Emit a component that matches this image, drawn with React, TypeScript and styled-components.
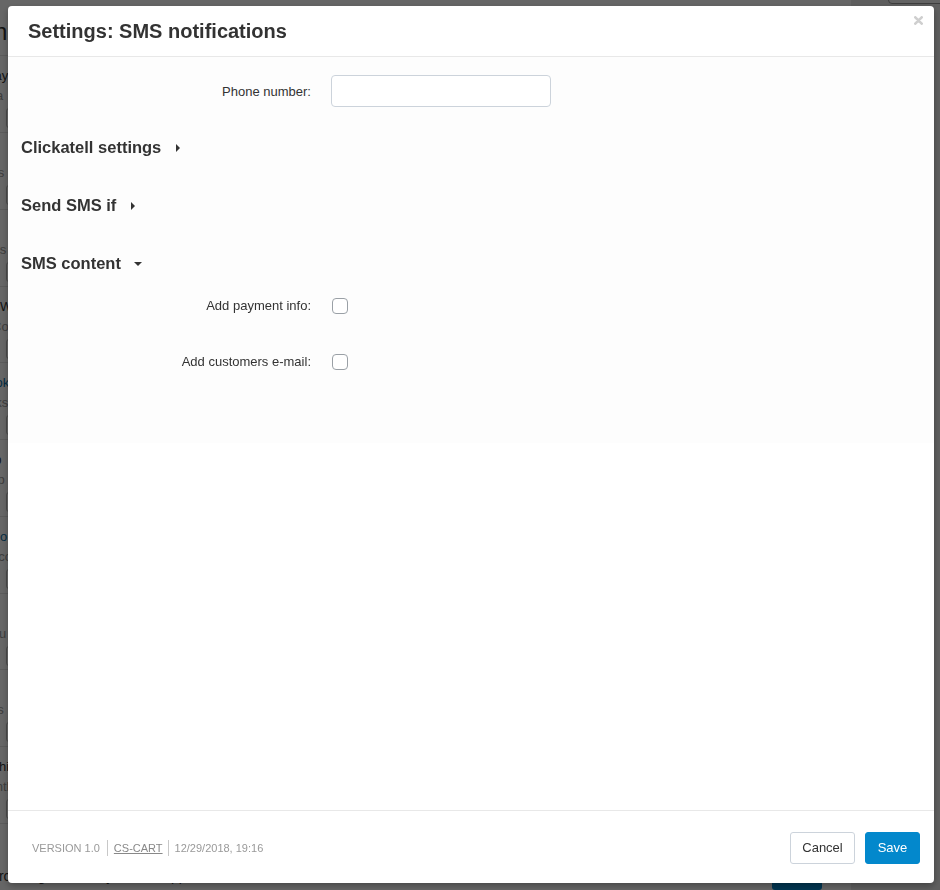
import React from "react";
import styled, { createGlobalStyle } from "styled-components";

const GlobalStyle = createGlobalStyle`
  html, body { margin: 0; padding: 0; }
  body {
    font-family: "Liberation Sans", Arial, sans-serif;
    background: #ffffff;
    overflow: hidden;
  }
  * { box-sizing: border-box; }
`;

/* ---------- background page (under the overlay) ---------- */

const Page = styled.div`
  position: relative;
  width: 940px;
  height: 890px;
  overflow: hidden;
  display: flex;
  background: #ffffff;
`;

const PageMain = styled.div`
  flex: 1;
  display: flex;
  flex-direction: column;
`;

const PageTop = styled.div`
  height: 57px;
  border-bottom: 1px solid #e4e4e4;
  display: flex;
  align-items: center;
  padding-top: 8px;
`;

const PageHeading = styled.div`
  font-size: 24px;
  color: #333;
  margin-left: -62px;
  white-space: nowrap;
`;

const BgRow = styled.div`
  height: 78px;
  border-bottom: 1px solid #e4e4e4;
  padding-top: 12px;
  display: flex;
  flex-direction: column;
  gap: 4px;
  white-space: nowrap;
`;

const BgTitle = styled.div<{ $link?: boolean; $shift: number }>`
  font-size: 13px;
  height: 16px;
  color: ${(p) => (p.$link ? "#0b71a8" : "#333")};
  margin-left: ${(p) => -p.$shift}px;
`;

const BgDesc = styled.div<{ $shift: number }>`
  font-size: 13px;
  height: 16px;
  color: #999;
  margin-left: ${(p) => -p.$shift}px;
`;

const BgInput = styled.div`
  margin-left: 6px;
  width: 300px;
  height: 20px;
  border: 1px solid #bbb;
  border-radius: 3px;
`;

const BgLast = styled.div`
  padding-top: 44px;
  display: flex;
  align-items: flex-start;
  font-size: 14px;
  color: #333;
  white-space: nowrap;
`;

const BgLastText = styled.span`
  margin-left: -26px;
`;

const BgButton = styled.div`
  margin-left: auto;
  margin-right: 29px;
  margin-top: -2px;
  width: 50px;
  height: 24px;
  border-radius: 3px;
  background: #0388cc;
`;

const PageSide = styled.div`
  width: 89px;
  background: #ececec;
  display: flex;
  flex-direction: column;
  padding: 0 0 0 37px;
`;

const SideTab = styled.div`
  width: 60px;
  height: 10px;
  margin-top: -6px;
  border: 1px solid #999;
  border-radius: 4px;
  background: #f8f8f8;
`;

const Overlay = styled.div`
  position: fixed;
  inset: 0;
  background: rgba(0, 0, 0, 0.6);
`;

/* ---------- modal ---------- */

const Modal = styled.div`
  position: fixed;
  top: 6px;
  left: 8px;
  width: 926px;
  height: 877px;
  background: #ffffff;
  border-radius: 4px;
  box-shadow: 0 3px 7px rgba(0, 0, 0, 0.3);
  display: flex;
  flex-direction: column;
  overflow: hidden;
`;

const Header = styled.div`
  position: relative;
  height: 51px;
  flex: none;
  border-bottom: 1px solid #e8e8e8;
  display: flex;
  align-items: center;
  padding: 0 20px 1px;
`;

const Title = styled.h3`
  margin: 0;
  font-size: 20px;
  font-weight: bold;
  color: #333;
  line-height: 24px;
`;

const Close = styled.button`
  position: absolute;
  top: 10px;
  right: 11px;
  border: 0;
  background: transparent;
  padding: 0;
  width: 9px;
  height: 9px;
  display: flex;
  cursor: pointer;
`;

const Body = styled.div`
  flex: 1;
  background: #ffffff;
`;

const Content = styled.div`
  background: #fdfdfd;
  padding: 18px 0 72px 13px;
  display: flex;
  flex-direction: column;
`;

const FormRow = styled.div<{ $mt?: number; $h: number }>`
  display: grid;
  grid-template-columns: 290px 1fr;
  column-gap: 20px;
  align-items: center;
  height: ${(p) => p.$h}px;
  margin-top: ${(p) => p.$mt ?? 0}px;
`;

const Label = styled.label<{ $down?: number }>`
  text-align: right;
  font-size: 13px;
  color: #333;
  padding-top: ${(p) => p.$down ?? 0}px;
`;

const TextInput = styled.input`
  width: 220px;
  height: 32px;
  border: 1px solid #ccd3db;
  border-radius: 4px;
  background: #fff;
  padding: 4px 8px;
  font-size: 13px;
  font-family: inherit;
  outline: none;
`;

const CheckBox = styled.input.attrs({ type: "checkbox" })`
  appearance: none;
  -webkit-appearance: none;
  display: block;
  margin: 1px 0 0 1px;
  width: 16px;
  height: 16px;
  border: 1px solid #9aa0a6;
  border-radius: 4px;
  background: #fff;
`;

const Section = styled.div<{ $mt: number }>`
  display: flex;
  align-items: center;
  height: 24px;
  margin-top: ${(p) => p.$mt}px;
  font-size: 16.5px;
  font-weight: bold;
  color: #333;
  cursor: pointer;
`;

const Caret = styled.span<{ $open?: boolean }>`
  display: inline-block;
  width: 0;
  height: 0;
  margin-left: ${(p) => (p.$open ? 13 : 15)}px;
  margin-top: 1px;
  ${(p) =>
    p.$open
      ? `border-left: 4px solid transparent;
         border-right: 4px solid transparent;
         border-top: 4px solid #333;`
      : `border-top: 4px solid transparent;
         border-bottom: 4px solid transparent;
         border-left: 4px solid #333;`}
`;

const Footer = styled.div`
  flex: none;
  height: 73px;
  border-top: 1px solid #e8e8e8;
  display: flex;
  align-items: center;
  justify-content: space-between;
  padding: 0 14px 0 24px;
`;

const Info = styled.div`
  display: flex;
  align-items: center;
  font-size: 11px;
  color: #999;
  margin-top: 1px;
`;

const Sep = styled.span<{ $l: number; $r: number }>`
  display: inline-block;
  width: 1px;
  height: 16px;
  background: #c8c8c8;
  margin: 0 ${(p) => p.$r}px 0 ${(p) => p.$l}px;
`;

const InfoLink = styled.a`
  color: #888;
  text-decoration: underline;
`;

const Actions = styled.div`
  display: flex;
  gap: 10px;
  margin-top: 1px;
`;

const Button = styled.button<{ $primary?: boolean }>`
  height: 32px;
  width: ${(p) => (p.$primary ? 55 : 65)}px;
  padding: 0;
  border-radius: 3px;
  font-family: inherit;
  font-size: 13px;
  cursor: pointer;
  border: 1px solid ${(p) => (p.$primary ? "#0388cc" : "#ccd3db")};
  background: ${(p) => (p.$primary ? "#0388cc" : "#ffffff")};
  color: ${(p) => (p.$primary ? "#ffffff" : "#333")};
`;

const bgRows: { title?: string; link?: boolean; ts?: number; desc: string; ds: number }[] = [
  { title: "Gateway", ts: 43, desc: "Cleara", ds: 35 },
  { desc: "Purpos", ds: 37 },
  { desc: "Sells", ds: 22 },
  { title: "Wa", ts: 0, desc: "Cof", ds: 8 },
  { title: "Hook", link: true, ts: 21, desc: "Links", ds: 22 },
  { title: "Gap", ts: 23, desc: "Grp", ds: 17 },
  { title: "Boo", link: true, ts: 16, desc: "Acco", ds: 17 },
  { desc: "Statu", ds: 24 },
  { desc: "Tess", ds: 23 },
  { title: "This", ts: 9, desc: "Withth", ds: 23 },
];

export default function App() {
  return (
    <>
      <GlobalStyle />
      <Page>
        <PageMain>
          <PageTop>
            <PageHeading>Addon</PageHeading>
          </PageTop>
          {bgRows.map((r, i) => (
            <BgRow key={i}>
              <BgTitle $link={r.link} $shift={r.ts ?? 0}>
                {r.title ?? ""}
              </BgTitle>
              <BgDesc $shift={r.ds}>{r.desc}</BgDesc>
              <BgInput />
            </BgRow>
          ))}
          <BgLast>
            <BgLastText>Search engine friendly URLs support</BgLastText>
            <BgButton />
          </BgLast>
        </PageMain>
        <PageSide>
          <SideTab />
        </PageSide>
        <Overlay />
      </Page>

      <Modal role="dialog">
        <Header>
          <Title>Settings: SMS notifications</Title>
          <Close aria-label="Close">
            <svg width="9" height="9" viewBox="0 0 9 9">
              <path
                d="M1.3 1.3 L7.7 7.7 M7.7 1.3 L1.3 7.7"
                stroke="#cfcfcf"
                strokeWidth="2.6"
                strokeLinecap="round"
              />
            </svg>
          </Close>
        </Header>
        <Body>
          <Content>
            <FormRow $h={32}>
              <Label>Phone number:</Label>
              <TextInput type="text" />
            </FormRow>

            <Section $mt={28}>
              Clickatell settings
              <Caret />
            </Section>
            <Section $mt={34}>
              Send SMS if
              <Caret />
            </Section>
            <Section $mt={34}>
              SMS content
              <Caret $open />
            </Section>

            <FormRow $h={20} $mt={20}>
              <Label $down={1}>Add payment info:</Label>
              <div>
                <CheckBox />
              </div>
            </FormRow>
            <FormRow $h={20} $mt={36}>
              <Label $down={1}>Add customers e-mail:</Label>
              <div>
                <CheckBox />
              </div>
            </FormRow>
          </Content>
        </Body>
        <Footer>
          <Info>
            <span>VERSION 1.0</span>
            <Sep $l={7} $r={6} />
            <InfoLink>CS-CART</InfoLink>
            <Sep $l={5} $r={6} />
            <span>12/29/2018, 19:16</span>
          </Info>
          <Actions>
            <Button>Cancel</Button>
            <Button $primary>Save</Button>
          </Actions>
        </Footer>
      </Modal>
    </>
  );
}
